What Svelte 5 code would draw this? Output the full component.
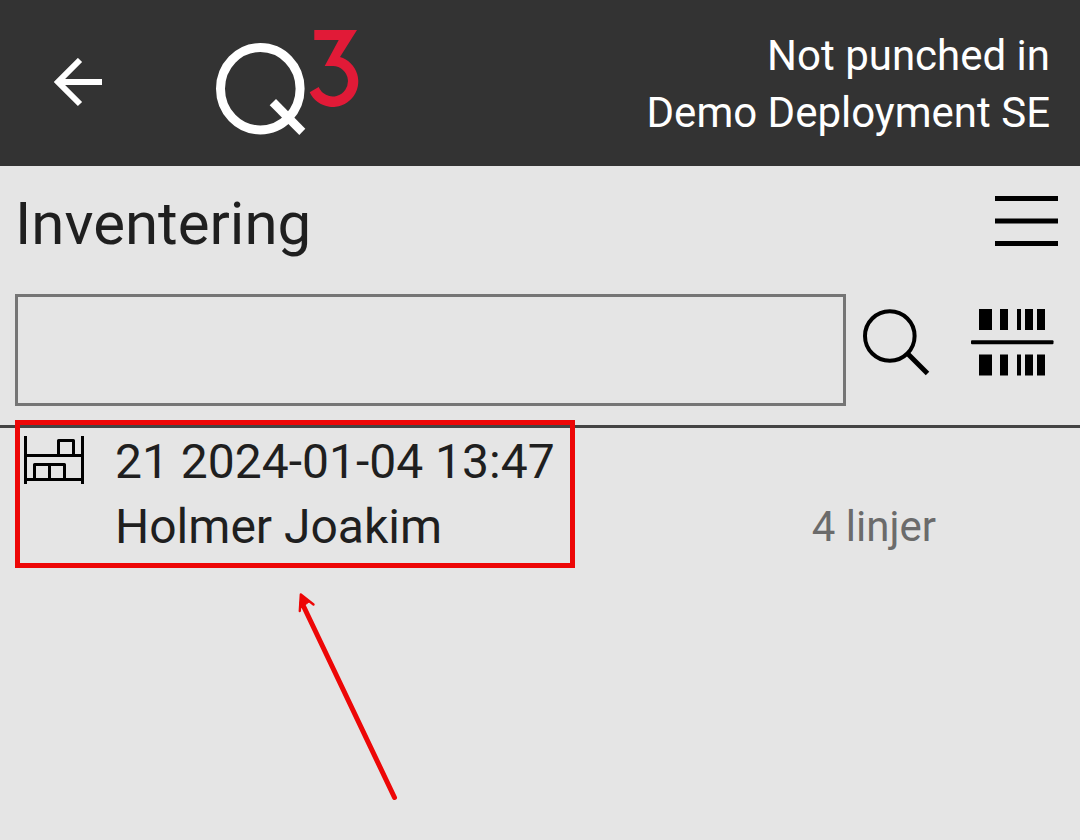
<script>
    let search = $state('')

    const status = ['Not punched in', 'Demo Deployment SE']
    const records = [
        { id: 21, time: '2024-01-04 13:47', user: 'Holmer Joakim', lines: 4 },
    ]

    // x and width of each bar in the scan icon
    const bars = [[8, 13], [29, 8], [46, 4], [54, 8], [66, 8]]
</script>

<div class="page">
    <header>
        <button class="back" aria-label="Back">
            <svg width="48" height="52" viewBox="0 0 48 52">
                <path d="M26 2L4 24L26 46M5 24H48" fill="none" stroke="#fff" stroke-width="6" />
            </svg>
        </button>
        <svg class="logo" width="144" height="108" viewBox="0 0 144 108" role="img" aria-label="Q3">
            <ellipse cx="44.3" cy="58.7" rx="39.8" ry="41.2" fill="none" stroke="#fff" stroke-width="9" />
            <path d="M60 69L53.7 75.3L83.3 105L89.3 98.7Z" fill="#fff" />
            <path d="M98.3 0H141L124 27A25.5 25.5 0 1 1 93.7 62.3L102.7 57A15.2 15.2 0 1 0 117 36H108.7L122.7 10H98.3Z" fill="#e11a37" />
        </svg>
        <div class="status">
            {#each status as line}
                <div>{line}</div>
            {/each}
        </div>
    </header>

    <main>
        <div class="title">
            <h1>Inventering</h1>
            <button aria-label="Menu">
                <svg width="63" height="56" viewBox="0 0 63 56">
                    <path d="M0 2.5H63M0 25H63M0 47.5H63" stroke="#000" stroke-width="5" />
                </svg>
            </button>
        </div>

        <form class="search" onsubmit={(e)=>e.preventDefault()}>
            <input type="text" aria-label="Search" bind:value={search}>
            <button type="submit" aria-label="Search">
                <svg width="67" height="84" viewBox="0 0 67 84">
                    <circle cx="26.8" cy="28" r="24.8" fill="none" stroke="#000" stroke-width="4" />
                    <path d="M45 46L64.5 65.5" stroke="#000" stroke-width="5" />
                </svg>
            </button>
            <button type="button" class="scan" aria-label="Scan barcode">
                <svg width="83" height="84" viewBox="0 0 83 84">
                    {#each bars as [x, width]}
                        <rect {x} y="1" {width} height="21" />
                        <rect {x} y="46.5" {width} height="21" />
                    {/each}
                    <rect y="32.3" width="82.5" height="4" rx="1" />
                </svg>
            </button>
        </form>

        <div class="records">
            {#each records as record}
                <button class="record">
                    <svg width="60" height="48" viewBox="0 0 60 48" fill="none" stroke="#000" stroke-width="3">
                        <path d="M1.5 0V48M58.5 0V48M0 19.5H60M0 43.5H60" />
                        <path d="M34.5 19V4.5H49.5V19M10.5 43V28.5H40.5V43M25.5 28V43" stroke-linejoin="round" />
                    </svg>
                    <span class="info">
                        <span>{record.id} {record.time}</span>
                        <span>{record.user}</span>
                    </span>
                    <span class="lines">{record.lines} linjer</span>
                </button>
            {/each}
            <div class="highlight"></div>
            <svg class="arrow" width="110" height="214" viewBox="0 0 110 214" fill="none" stroke="#ed0707" stroke-linecap="round" stroke-linejoin="round">
                <path d="M12 13L104.5 207.5" stroke-width="5" />
                <path d="M9.8 21L10.8 4.5L23.5 14.5" stroke-width="2.4" />
                <path d="M11 5L11 18L19 12Z" fill="#ed0707" stroke-width="1" />
            </svg>
        </div>
    </main>
</div>

<style>
    :global(body) {
        margin: 0;
        background: #e5e5e5;
    }
    .page {
        min-height: 100vh;
        font-family: Roboto, "Liberation Sans", sans-serif;
        color: #1f1f1f;
    }
    svg {
        display: block;
    }
    button {
        padding: 0;
        border: 0;
        background: none;
        font: inherit;
        color: inherit;
        cursor: pointer;
    }
    header {
        display: flex;
        align-items: center;
        padding: 27px 30px 25px 54px;
        background: #333;
        color: #fff;
    }
    .logo {
        margin-left: 114px;
    }
    .status {
        margin-left: auto;
        font-size: 42px;
        line-height: 57px;
        text-align: right;
    }
    .title {
        display: flex;
        align-items: center;
        justify-content: space-between;
        padding: 23px 22px 35px 15px;
    }
    h1 {
        margin: 0;
        font-size: 60px;
        font-weight: 400;
        line-height: 70px;
    }
    .search {
        display: flex;
        align-items: center;
        gap: 17px;
        padding: 0 26px 19px 15px;
        border-bottom: 3px solid #444;
    }
    input {
        flex: 1;
        min-width: 0;
        height: 112px;
        box-sizing: border-box;
        padding: 0 16px;
        border: 3px solid #757575;
        border-radius: 0;
        background: transparent;
        font: inherit;
        font-size: 48px;
    }
    .scan {
        margin-left: 24px;
    }
    .records {
        position: relative;
        padding-top: 1px;
    }
    .record {
        display: flex;
        align-items: flex-start;
        width: 100%;
        padding: 0 144px 0 24px;
        text-align: left;
        line-height: 65px;
    }
    .record svg {
        flex: none;
        margin: 7px 31px 0 0;
    }
    .info {
        flex: 1;
        font-size: 48px;
    }
    .info span {
        display: block;
    }
    .lines {
        align-self: flex-end;
        font-size: 42px;
        color: #6b6b6b;
    }
    /* marks the record to open */
    .highlight {
        position: absolute;
        top: -8px;
        left: 15px;
        width: 560px;
        height: 148px;
        box-sizing: border-box;
        border: 5px solid #ed0707;
        pointer-events: none;
    }
    .arrow {
        position: absolute;
        top: 162px;
        left: 290px;
        pointer-events: none;
    }
</style>
